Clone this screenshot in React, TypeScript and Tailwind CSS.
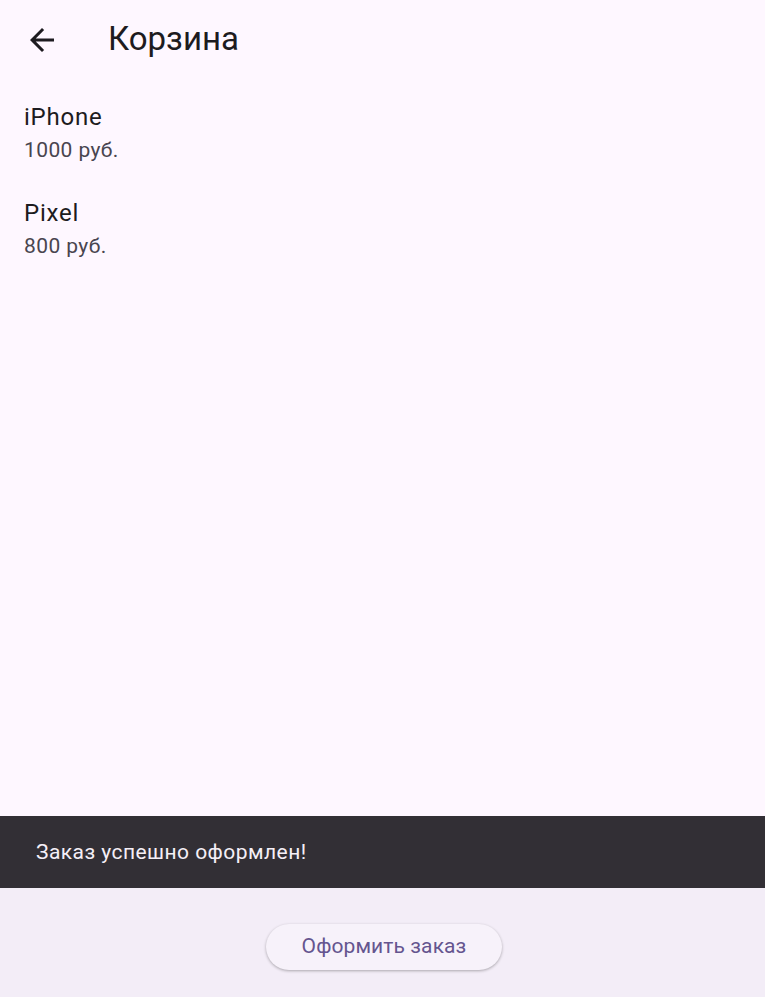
const items = [
  { name: 'iPhone', price: 1000 },
  { name: 'Pixel', price: 800 },
];

const BackArrow = () => (
  <svg viewBox="0 0 24 24" className="w-9 h-9" fill="#1D1B20">
    <path d="M20 11H7.83l5.59-5.59L12 4l-8 8 8 8 1.41-1.41L7.83 13H20v-2z" />
  </svg>
);

export default function App() {
  return (
    <div
      className="flex flex-col h-screen w-full bg-[#FEF7FF] overflow-hidden"
      style={{ fontFamily: 'Roboto, "Noto Sans", sans-serif' }}
    >
      <header className="flex items-center h-[80px] shrink-0">
        <button className="w-[84px] h-[80px] flex items-center justify-center">
          <BackArrow />
        </button>
        <h1 className="ml-[24px] text-[33px] leading-[40px] text-[#1D1B20] -mt-[2px]">Корзина</h1>
      </header>

      <ul className="flex-1 pt-[4px]">
        {items.map((item) => (
          <li key={item.name} className="h-[96px] px-[24px] py-[15px] flex flex-col">
            <span className="text-[24px] leading-[36px] tracking-[0.75px] text-[#1D1B20]">
              {item.name}
            </span>
            <span className="text-[21px] leading-[30px] tracking-[0.4px] text-[#49454F]">
              {item.price} руб.
            </span>
          </li>
        ))}
      </ul>

      <div className="h-[72px] shrink-0 bg-[#322F35] flex items-center px-[36px]">
        <span className="text-[21px] leading-[30px] text-[#F5EFF7] tracking-[0.45px]">
          Заказ успешно оформлен!
        </span>
      </div>

      <div className="h-[109px] shrink-0 bg-[#F3EDF7] flex justify-center pt-[36px] pl-[3px]">
        <button className="h-[46px] px-[36px] rounded-full bg-[#F7F2FA] text-[#65558F] text-[21px] tracking-[0.1px] shadow-[0_1px_3px_rgba(0,0,0,0.3)]">
          Оформить заказ
        </button>
      </div>
    </div>
  );
}
